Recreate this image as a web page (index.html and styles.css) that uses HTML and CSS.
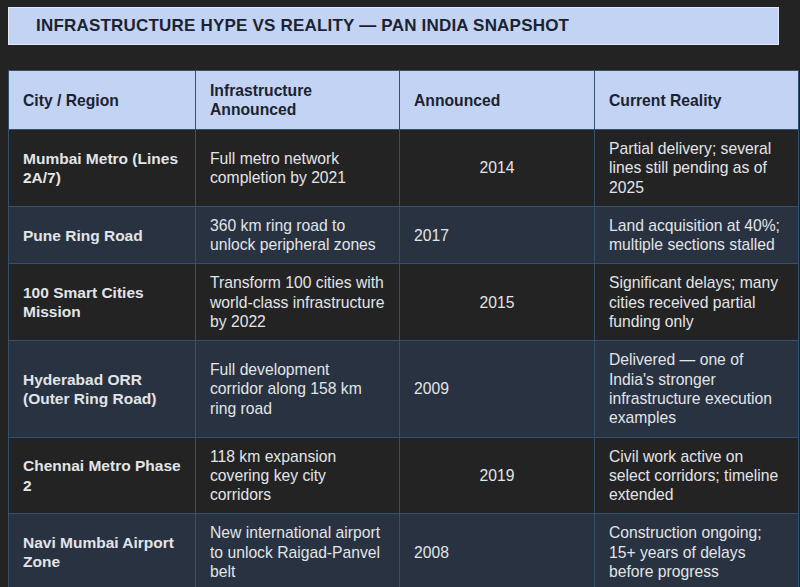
FILE: index.html
```html
<!DOCTYPE html>
<html lang="en">
<head>
<meta charset="utf-8">
<title>Infrastructure Hype vs Reality</title>
<link rel="stylesheet" href="styles.css">
</head>
<body>
<div class="page">
  <h2 class="title">INFRASTRUCTURE HYPE VS REALITY — PAN INDIA SNAPSHOT</h2>
  <table class="snap">
    <colgroup>
      <col class="c1"><col class="c2"><col class="c3"><col class="c4">
    </colgroup>
    <thead>
      <tr>
        <th>City / Region</th>
        <th>Infrastructure Announced</th>
        <th>Announced</th>
        <th>Current Reality</th>
      </tr>
    </thead>
    <tbody>
      <tr>
        <td class="city">Mumbai Metro (Lines 2A/7)</td>
        <td>Full metro network completion by 2021</td>
        <td class="year">2014</td>
        <td>Partial delivery; several lines still pending as of 2025</td>
      </tr>
      <tr>
        <td class="city">Pune Ring Road</td>
        <td>360 km ring road to unlock peripheral zones</td>
        <td class="year">2017</td>
        <td>Land acquisition at 40%; multiple sections stalled</td>
      </tr>
      <tr>
        <td class="city">100 Smart Cities Mission</td>
        <td>Transform 100 cities with world-class infrastructure by 2022</td>
        <td class="year">2015</td>
        <td>Significant delays; many cities received partial funding only</td>
      </tr>
      <tr>
        <td class="city">Hyderabad ORR (Outer Ring Road)</td>
        <td>Full development corridor along 158 km ring road</td>
        <td class="year">2009</td>
        <td>Delivered — one of India's stronger infrastructure execution examples</td>
      </tr>
      <tr>
        <td class="city">Chennai Metro Phase 2</td>
        <td>118 km expansion covering key city corridors</td>
        <td class="year">2019</td>
        <td>Civil work active on select corridors; timeline extended</td>
      </tr>
      <tr>
        <td class="city">Navi Mumbai Airport Zone</td>
        <td>New international airport to unlock Raigad-Panvel belt</td>
        <td class="year">2008</td>
        <td>Construction ongoing; 15+ years of delays before progress</td>
      </tr>
    </tbody>
  </table>
</div>
</body>
</html>
```

FILE: styles.css
```css
html, body {
  margin: 0;
  padding: 0;
  background: #232323;
}
body {
  font-family: "Liberation Sans", Arial, sans-serif;
  color: #e2e4e8;
  overflow: hidden;
}
.page {
  padding: 7px 0 0 8px;
}
.title {
  box-sizing: border-box;
  width: 771px;
  height: 38px;
  margin: 0;
  padding: 0 0 0 27px;
  display: flex;
  align-items: center;
  background: #c3d3f3;
  border: 1px solid #dfe7f8;
  color: #1b2330;
  font-size: 17px;
  font-weight: bold;
  letter-spacing: 0.2px;
}
.snap {
  margin-top: 25px;
  width: 790px;
  border-collapse: collapse;
  table-layout: fixed;
  font-size: 15.7px;
  line-height: 19.3px;
}
.c1 { width: 187px; }
.c2 { width: 204px; }
.c3 { width: 195px; }
.c4 { width: 204px; }
.snap th, .snap td {
  border: 1px solid #33506c;
  text-align: left;
  vertical-align: middle;
}
.snap th {
  background: #c3d3f3;
  color: #1b2330;
  font-weight: bold;
  padding: 10px 14px 10px 14px;
  line-height: 19px;
}
.snap td {
  padding: 9px 14px;
}
.snap tbody tr:nth-child(odd) {
  background: #232323;
}
.snap tbody tr:nth-child(even) {
  background: #283240;
}
.snap td.city {
  font-weight: bold;
  font-size: 15.5px;
  padding-right: 8px;
}
.snap tbody tr:nth-child(odd) td.year {
  text-align: center;
}
```
